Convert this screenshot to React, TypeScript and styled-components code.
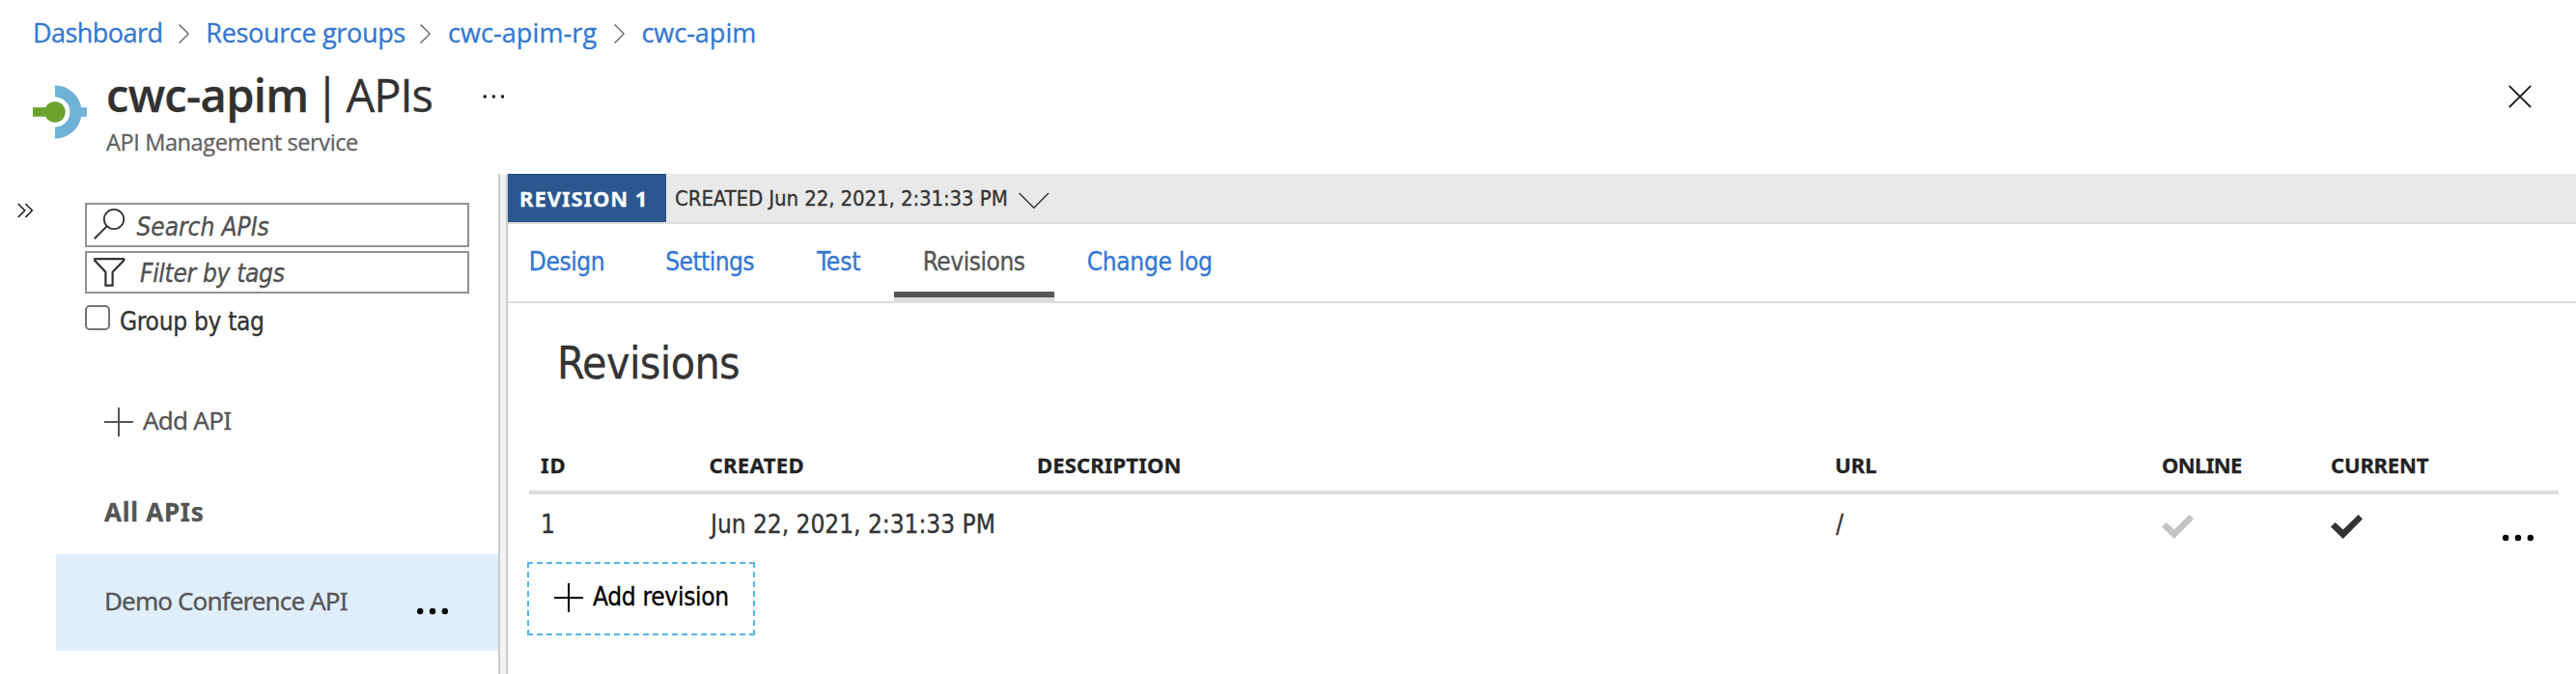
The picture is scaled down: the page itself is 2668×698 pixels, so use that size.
import React from 'react';
import styled, { createGlobalStyle, css } from 'styled-components';

const GlobalStyle = createGlobalStyle`
  * { box-sizing: border-box; }
  body {
    margin: 0;
    background: #fff;
    overflow: hidden;
    font-family: "DejaVu Sans Condensed", "DejaVu Sans", sans-serif;
    font-stretch: condensed;
  }
  svg { display: block; flex: none; }
`;

const segoe = css`font-family: "Open Sans", "Noto Sans", sans-serif; font-stretch: normal;`;
const tahoma = css`font-family: "Noto Sans", sans-serif; font-stretch: normal;`;

const Text = styled.span<{ $ls?: number }>`
  letter-spacing: ${(p) => p.$ls ?? 0}px;
  white-space: nowrap;
  -webkit-text-stroke: 0.3px currentColor;
`;

const Page = styled.div`
  display: flex;
  flex-direction: column;
  height: 698px;
`;

/* ---------- breadcrumb ---------- */
const Breadcrumbs = styled.nav`
  ${segoe}
  display: flex;
  align-items: center;
  height: 67px;
  padding-left: 34px;
  font-size: 27px;
  line-height: 40px;
`;
const Crumb = styled(Text)<{ $w: number }>`
  width: ${(p) => p.$w}px;
  color: #3277d3;
`;
const CrumbArrow = styled.svg`margin: 2px 17.5px 0 17px;`;

/* ---------- blade header ---------- */
const Header = styled.header`
  ${segoe}
  display: flex;
  height: 113px;
  padding: 0 46px 0 34px;
`;
const ServiceIcon = styled.svg`margin-top: 21px;`;
const HeaderText = styled.div`
  display: flex;
  flex-direction: column;
  width: 383px;
  margin-left: 20px;
`;
const Title = styled.h1`
  display: flex;
  margin: 0;
  font-size: 47px;
  line-height: 62px;
  font-weight: 400;
  color: #323130;
`;
const TitleName = styled(Text)`
  width: 216px;
  font-weight: 600;
`;
const TitleBar = styled(Text)`width: 32.5px;`;
const Subtitle = styled(Text)`
  margin-top: 2px;
  font-size: 23.5px;
  line-height: 32px;
  color: #63615f;
`;
const MoreButton = styled.svg`margin: 29px 0 0 6px;`;
const CloseButton = styled.svg`margin: 20px 0 0 auto;`;

/* ---------- body ---------- */
const Body = styled.div`
  display: flex;
  flex: 1;
`;
const CollapseStrip = styled.div`
  width: 58px;
  padding: 30px 0 0 18px;
`;
const Sidebar = styled.aside`
  display: flex;
  flex-direction: column;
  width: 458px;
  padding-top: 30px;
`;
const Field = styled.div<{ $h: number; $drop: number; $gap: number }>`
  display: flex;
  width: 398px;
  height: ${(p) => p.$h}px;
  margin: 0 0 4px 30px;
  padding-left: 7px;
  gap: ${(p) => p.$gap}px;
  border: 2px solid #919191;
  color: #505050;
  font-size: 26px;
  font-style: italic;
  line-height: ${(p) => p.$h - 4 + p.$drop}px;
`;
const GroupRow = styled.label`
  display: flex;
  height: 102px;
  padding: 8px 0 0 30px;
  font-size: 26px;
  line-height: 34px;
  color: #333;
`;
const Checkbox = styled.span`
  width: 26px;
  height: 26px;
  margin-right: 10px;
  border: 2px solid #767676;
  border-radius: 5px;
`;
const AddApi = styled.div`
  ${tahoma}
  display: flex;
  height: 76px;
  padding-left: 50px;
  gap: 10px;
  font-size: 26px;
  line-height: 50px;
  color: #555;
`;
const AddIcon = styled.svg`margin-top: 12px;`;
const ApiItem = styled.div<{ $selected?: boolean; $bold?: boolean }>`
  ${tahoma}
  display: flex;
  justify-content: space-between;
  height: ${(p) => (p.$selected ? 100 : 88)}px;
  padding: 0 52px 0 50px;
  background: ${(p) => (p.$selected ? '#e0eefc' : 'transparent')};
  font-size: 26px;
  font-weight: ${(p) => (p.$bold ? 700 : 400)};
  line-height: ${(p) => (p.$selected ? 96 : 88)}px;
  color: #555;
`;
const ItemMenu = styled.svg`margin-top: 55px;`;
const Splitter = styled.div`
  width: 10px;
  border: solid #ccc;
  border-width: 0 2px;
  background: #f3f3f3;
`;
const Main = styled.main`
  display: flex;
  flex: 1;
  flex-direction: column;
`;
const RevisionBar = styled.div`
  display: flex;
  height: 52px;
  background: #e9e9e9;
  border-bottom: 2px solid #dcdcdc;
  font-size: 22px;
  line-height: 52px;
  color: #333;
`;
const RevisionBadge = styled.div`
  ${tahoma}
  width: 164px;
  height: 50px;
  margin-right: 9px;
  padding-left: 12px;
  background: #2b568f;
  color: #fff;
  font-weight: 700;
  line-height: 50px;
`;
const BarChevron = styled.svg`margin: 19px 0 0 11px;`;

const Tabs = styled.div`
  display: flex;
  height: 82px;
  border-bottom: 2px solid #dcdcdc;
  font-size: 26px;
`;
const Tab = styled.div<{ $w: number; $pad: number; $active?: boolean }>`
  width: ${(p) => p.$w}px;
  height: 80px;
  padding-left: ${(p) => p.$pad}px;
  line-height: 78px;
  color: ${(p) => (p.$active ? '#555' : '#3277d3')};
  ${(p) =>
    p.$active &&
    css`
      background: linear-gradient(to bottom, transparent 70px, #555 70px, #555 76px, #dcdcdc 76px);
    `}
`;
const Heading = styled.h2`
  height: 124px;
  margin: 0;
  padding-left: 51px;
  font-size: 46px;
  font-weight: 400;
  line-height: 124px;
  color: #333;
`;
const Table = styled.div`
  margin: 12px 18px 0 22px;
`;
const Row = styled.div`
  display: grid;
  grid-template-columns: 174.5px 339.5px 826.5px 338.5px 175px 1fr;
  height: 70px;
  padding-left: 12px;
  font-size: 26px;
  line-height: 62px;
  color: #333;
`;
const HeadRow = styled(Row)`
  ${tahoma}
  height: 62px;
  border-bottom: 4px solid #dcdcdc;
  font-size: 22px;
  font-weight: 700;
  color: #222;
`;
const Cell = styled(Text)<{ $pad?: number }>`padding-left: ${(p) => p.$pad ?? 0}px;`;
const LastCell = styled.div`display: flex;`;
const CheckIcon = styled.svg`margin-top: 21px;`;
const RowMenu = styled.svg`margin: 41px 26px 0 auto;`;

const AddRevision = styled.button`
  display: flex;
  width: 236px;
  height: 76px;
  margin-left: 20px;
  padding: 0 0 0 26px;
  gap: 10px;
  border: 2px dashed #50b8ea;
  background: none;
  font: inherit;
  font-size: 26px;
  line-height: 68px;
  color: #000;
`;
const AddRevisionIcon = styled.svg`margin-top: 20px;`;

const Plus = ({ as: Svg, color }: { as: React.ElementType; color: string }) => (
  <Svg width="30" height="30" viewBox="0 0 30 30">
    <path d="M15 0V30M0 15H30" stroke={color} strokeWidth="2" fill="none" />
  </Svg>
);

const Dots = ({ as: Svg }: { as: React.ElementType }) => (
  <Svg width="32" height="8" viewBox="0 0 32 8">
    <circle cx="3.2" cy="4" r="3.2" />
    <circle cx="16" cy="4" r="3.2" />
    <circle cx="28.8" cy="4" r="3.2" />
  </Svg>
);

const Check = ({ color }: { color: string }) => (
  <CheckIcon width="33" height="25" viewBox="0 0 33 25">
    <path d="M4.7 8 12.7 15.6 28.6 0 33 4.4 12.7 25 0 12.4Z" fill={color} />
  </CheckIcon>
);

const crumbs = [
  { label: 'Dashboard', w: 133.8, ls: -0.55 },
  { label: 'Resource groups', w: 205.1, ls: -0.33 },
  { label: 'cwc-apim-rg', w: 155, ls: 0.1 },
  { label: 'cwc-apim', w: 120, ls: 0 },
];

const tabs = [
  { label: 'Design', w: 141.5, pad: 21.8, ls: -0.39 },
  { label: 'Settings', w: 157, pad: 21.7, ls: -0.52 },
  { label: 'Test', w: 101.5, pad: 21.5, ls: -0.05 },
  { label: 'Revisions', w: 166, pad: 29.7, ls: -0.44, active: true },
  { label: 'Change log', w: 200, pad: 33.7, ls: -0.28 },
];

const columns = [
  { label: 'ID', ls: 1 },
  { label: 'CREATED', ls: 0.4 },
  { label: 'DESCRIPTION', ls: 0.15 },
  { label: 'URL', ls: -0.03 },
  { label: 'ONLINE', ls: -0.6 },
  { label: 'CURRENT', ls: -0.19 },
];

export default function App() {
  return (
    <Page>
      <GlobalStyle />
      <Breadcrumbs>
        {crumbs.map((c, i) => (
          <React.Fragment key={c.label}>
            {i > 0 && (
              <CrumbArrow width="11" height="20" viewBox="0 0 11 20">
                <path d="M.6.5 10.2 10 .6 19.5" fill="none" stroke="#605e5c" strokeWidth="1.3" />
              </CrumbArrow>
            )}
            <Crumb $w={c.w} $ls={c.ls}>{c.label}</Crumb>
          </React.Fragment>
        ))}
      </Breadcrumbs>

      <Header>
        <ServiceIcon width="56" height="56" viewBox="0 0 56 56">
          <path
            d="M23 .4A27.6 27.6 0 0 1 50.2 23.3H56V32.7H50.2A27.6 27.6 0 0 1 23 55.6V43.4A15.4 15.4 0 0 0 23 12.6Z"
            fill="#70b1d8"
          />
          <path d="M0 23.3H13.2A10.8 10.8 0 1 1 13.2 32.7H0Z" fill="#6ba32f" />
        </ServiceIcon>
        <HeaderText>
          <Title>
            <TitleName $ls={-0.65}>cwc-apim</TitleName>
            <TitleBar>|</TitleBar>
            <Text $ls={-1}>APIs</Text>
          </Title>
          <Subtitle $ls={-0.38}>API Management service</Subtitle>
        </HeaderText>
        <MoreButton width="24" height="8" viewBox="0 0 24 8">
          <circle cx="3.2" cy="4" r="1.7" />
          <circle cx="12.3" cy="4" r="1.7" />
          <circle cx="21.5" cy="4" r="1.7" />
        </MoreButton>
        <CloseButton width="24" height="26" viewBox="0 0 24 26">
          <path d="M.8 1.8 23.2 24.2M23.2 1.8.8 24.2" stroke="#111" strokeWidth="1.7" />
        </CloseButton>
      </Header>

      <Body>
        <CollapseStrip>
          <svg width="17" height="16" viewBox="0 0 17 16">
            <path d="M.8 1 7.8 8 .8 15M8.4 1 15.4 8 8.4 15" fill="none" stroke="#111" strokeWidth="1.4" />
          </svg>
        </CollapseStrip>

        <Sidebar>
          <Field $h={46} $drop={4} $gap={11.5}>
            <svg width="33" height="42" viewBox="0 0 33 42">
              <circle cx="21" cy="15" r="10.2" fill="none" stroke="#333" strokeWidth="1.8" />
              <path d="M13.6 22.4.8 35.2" stroke="#333" strokeWidth="2" />
            </svg>
            <Text $ls={-0.03}>Search APIs</Text>
          </Field>
          <Field $h={44} $drop={2} $gap={15}>
            <svg width="33" height="40" viewBox="0 0 33 40">
              <path d="M1.2 6.2H31.2V7.8L19.6 19.8V33.6H12.4V19.8L1.2 7.8Z" fill="none" stroke="#333" strokeWidth="2.2" />
            </svg>
            <Text $ls={-0.3}>Filter by tags</Text>
          </Field>
          <GroupRow>
            <Checkbox />
            <Text $ls={-0.28}>Group by tag</Text>
          </GroupRow>
          <AddApi>
            <Plus as={AddIcon} color="#555" />
            <Text $ls={-0.75}>Add API</Text>
          </AddApi>
          <ApiItem $bold><Text $ls={0.74}>All APIs</Text></ApiItem>
          <ApiItem $selected>
            <Text $ls={-0.88}>Demo Conference API</Text>
            <Dots as={ItemMenu} />
          </ApiItem>
        </Sidebar>

        <Splitter />

        <Main>
          <RevisionBar>
            <RevisionBadge><Text $ls={0.95}>REVISION 1</Text></RevisionBadge>
            <Text $ls={-0.09}>CREATED Jun 22, 2021, 2:31:33 PM</Text>
            <BarChevron width="32" height="18" viewBox="0 0 32 18">
              <path d="M.6 1 15.8 16.2 31 1" fill="none" stroke="#333" strokeWidth="1.5" />
            </BarChevron>
          </RevisionBar>
          <Tabs>
            {tabs.map((t) => (
              <Tab key={t.label} $w={t.w} $pad={t.pad} $active={t.active}>
                <Text $ls={t.ls}>{t.label}</Text>
              </Tab>
            ))}
          </Tabs>
          <Heading><Text $ls={-0.58}>Revisions</Text></Heading>
          <Table>
            <HeadRow>
              {columns.map((c) => <Text key={c.label} $ls={c.ls}>{c.label}</Text>)}
            </HeadRow>
            <Row>
              <Text>1</Text>
              <Cell $pad={1.5}>Jun 22, 2021, 2:31:33 PM</Cell>
              <Text />
              <Cell $pad={1}>/</Cell>
              <Check color="#c3c3c3" />
              <LastCell>
                <Check color="#333" />
                <Dots as={RowMenu} />
              </LastCell>
            </Row>
          </Table>
          <AddRevision>
            <Plus as={AddRevisionIcon} color="#000" />
            <Text $ls={-0.29}>Add revision</Text>
          </AddRevision>
        </Main>
      </Body>
    </Page>
  );
}
